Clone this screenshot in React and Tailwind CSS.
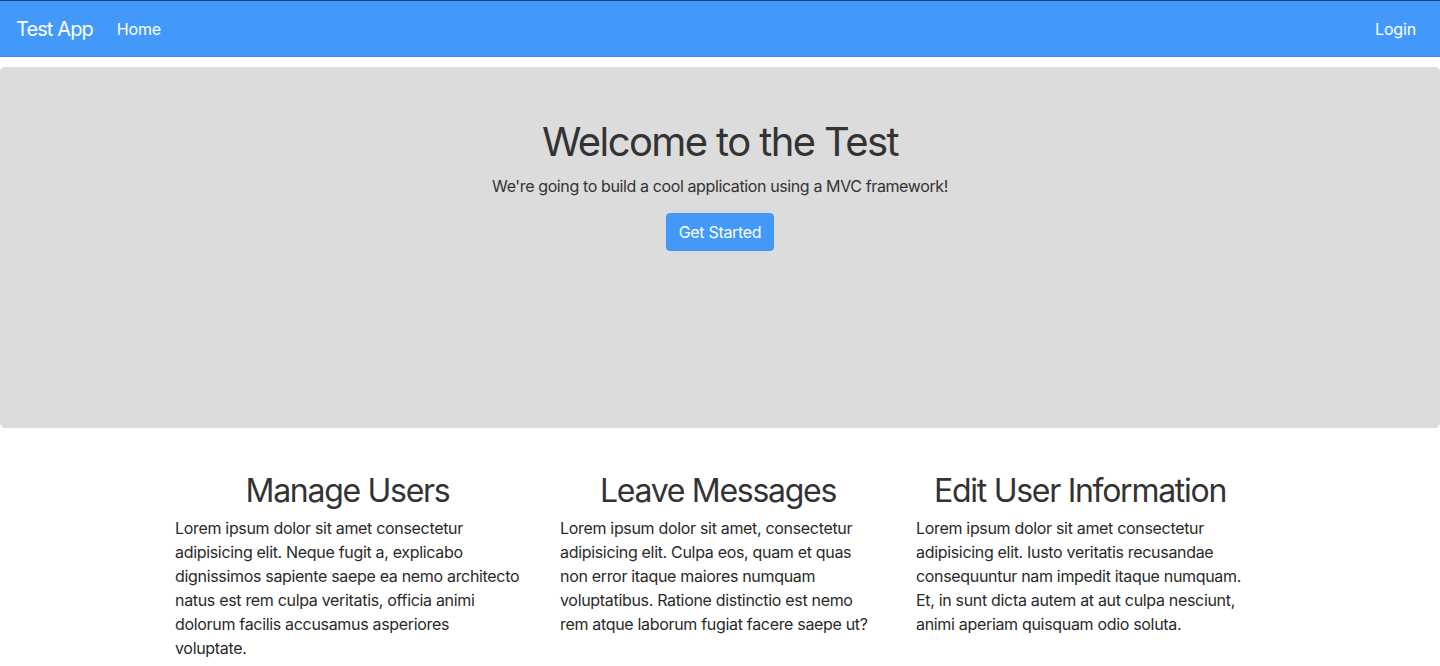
import React from "react";

const font = { fontFamily: "Inter, 'Noto Sans', sans-serif" };

export default function App() {
  return (
    <div className="min-h-[666px] bg-white text-[#212529]" style={font}>
      <nav className="h-[57px] bg-[#4399fa] border-t border-[#1f3f73] border-b border-b-[#3f8ce6] flex items-center px-4 text-white">
        <span className="text-[20px] leading-[30px] tracking-[-0.045em]">Test App</span>
        <span className="ml-6 text-[16px] tracking-[-0.01em]">Home</span>
        <span className="ml-auto mr-2 text-[16px] tracking-[-0.01em]">Login</span>
      </nav>
      <section className="mt-[10px] h-[361px] bg-[#dcdcdc] rounded-[5px] flex flex-col items-center pt-[51px]">
        <h1 className="text-[40px] leading-[48px] tracking-[-0.04em] text-[#333]">Welcome to the Test</h1>
        <p className="mt-2 text-[16px] leading-6 tracking-[-0.024em] text-[#333]">We're going to build a cool application using a MVC framework!</p>
        <button className="mt-[15px] h-[38px] px-3 rounded-[4px] bg-[#4399fa] border border-[#3e93f3] text-white text-[16px] leading-6 tracking-[-0.02em]">Get Started</button>
      </section>
      <section className="flex gap-10 pl-[175px] pt-[44px]">
        <div className="w-[345px]">
          <h2 className="text-[32px] leading-[38px] tracking-[-0.04em] text-center text-[#333] mb-[6px]">Manage Users</h2>
          <p className="text-[16px] leading-6 tracking-[-0.02em] text-[#2a2a2a]">Lorem ipsum dolor sit amet consectetur adipisicing elit. Neque fugit a, explicabo dignissimos sapiente saepe ea nemo architecto natus est rem culpa veritatis, officia animi dolorum facilis accusamus asperiores voluptate.</p>
        </div>
        <div className="w-[316px]">
          <h2 className="text-[32px] leading-[38px] tracking-[-0.04em] text-center text-[#333] mb-[6px]">Leave Messages</h2>
          <p className="text-[16px] leading-6 tracking-[-0.02em] text-[#2a2a2a]">Lorem ipsum dolor sit amet, consectetur adipisicing elit. Culpa eos, quam et quas non error itaque maiores numquam voluptatibus. Ratione distinctio est nemo rem atque laborum fugiat facere saepe ut?</p>
        </div>
        <div className="w-[328px]">
          <h2 className="text-[32px] leading-[38px] tracking-[-0.04em] text-center text-[#333] mb-[6px]">Edit User Information</h2>
          <p className="text-[16px] leading-6 tracking-[-0.02em] text-[#2a2a2a]">Lorem ipsum dolor sit amet consectetur adipisicing elit. Iusto veritatis recusandae consequuntur nam impedit itaque numquam. Et, in sunt dicta autem at aut culpa nesciunt, animi aperiam quisquam odio soluta.</p>
        </div>
      </section>
    </div>
  );
}
